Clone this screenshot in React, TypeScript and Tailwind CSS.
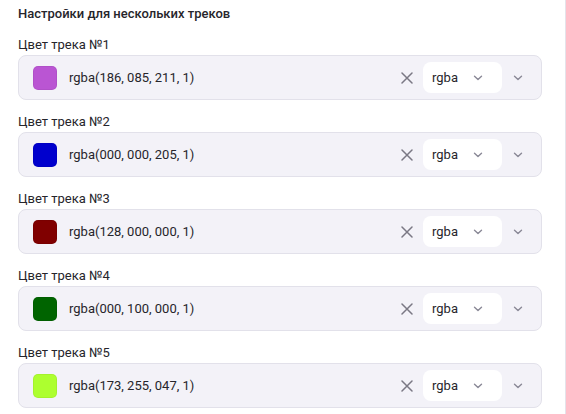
const tracks = [
  { label: 'Цвет трека №1', value: 'rgba(186, 085, 211, 1)', color: '#ba55d3' },
  { label: 'Цвет трека №2', value: 'rgba(000, 000, 205, 1)', color: '#0000cd' },
  { label: 'Цвет трека №3', value: 'rgba(128, 000, 000, 1)', color: '#800000' },
  { label: 'Цвет трека №4', value: 'rgba(000, 100, 000, 1)', color: '#006400' },
  { label: 'Цвет трека №5', value: 'rgba(173, 255, 047, 1)', color: '#adff2f' },
]

function Chevron() {
  return (
    <svg width="10" height="6" viewBox="0 0 10 6" fill="none">
      <path d="M1.5 1.2L5 4.5L8.5 1.2" stroke="#8a8896" strokeWidth="1.4" strokeLinecap="round" strokeLinejoin="round" />
    </svg>
  )
}

function ClearIcon() {
  return (
    <svg width="12" height="12" viewBox="0 0 12 12" fill="none">
      <path d="M1 1L11 11M11 1L1 11" stroke="#7a7884" strokeWidth="1.5" strokeLinecap="round" />
    </svg>
  )
}

function ColorField({ label, value, color }: { label: string; value: string; color: string }) {
  return (
    <div className="flex flex-col">
      <div className="text-[13px] leading-4 text-[#26252b] mb-[2px]">{label}</div>
      <div className="flex items-center h-[45px] w-[524px] rounded-lg border border-[#e2e1ea] bg-[#f3f2f8] pl-[14px] pr-[18px]">
        <div className="w-6 h-6 rounded-[5px] border border-black/5" style={{ backgroundColor: color }} />
        <span className="ml-3 text-[13px] text-[#26252b]">{value}</span>
        <div className="ml-auto flex items-center">
          <ClearIcon />
          <div className="ml-[10px] flex items-center h-[31px] w-[79px] rounded-lg bg-white pl-[9px] pr-[19px]">
            <span className="text-[13px] text-[#26252b]">rgba</span>
            <span className="ml-auto flex"><Chevron /></span>
          </div>
          <span className="ml-[11px] flex"><Chevron /></span>
        </div>
      </div>
    </div>
  )
}

export default function App() {
  return (
    <div className="w-[566px] h-[414px] bg-white border-r border-[#e4e3ea] pl-[18px] pt-[6px] overflow-hidden font-['Roboto',sans-serif]">
      <div className="text-[13px] leading-4 font-medium text-[#26252b]">Настройки для нескольких треков</div>
      <div className="mt-[15px] flex flex-col gap-[14px]">
        {tracks.map(t => (
          <ColorField key={t.label} {...t} />
        ))}
      </div>
    </div>
  )
}
